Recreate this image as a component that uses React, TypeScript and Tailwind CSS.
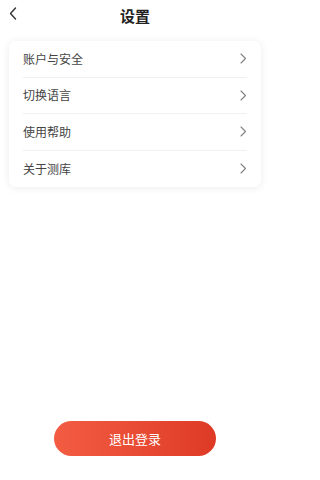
const items = ["账户与安全", "切换语言", "使用帮助", "关于测库"];

export default function App() {
  return (
    <main className="flex h-[480px] w-[270px] flex-col bg-white font-['Noto_Sans_CJK_SC',sans-serif] text-[#333]">
      <header className="relative flex h-[30px] items-center justify-center">
        <svg className="absolute left-[9px] top-[7px] h-[13px] w-[8px]" viewBox="0 0 8 13" fill="none">
          <polyline points="6.5,1 1.5,6.5 6.5,12" stroke="#333" strokeWidth="1.4" strokeLinecap="round" strokeLinejoin="round" />
        </svg>
        <h1 className="text-[15px] font-bold leading-none text-[#222]">设置</h1>
      </header>

      <section className="mx-[9px] mt-[11px] rounded-[7px] bg-white px-[14px] shadow-[0_1px_8px_rgba(0,0,0,0.08)]">
        {items.map((item, i) => (
          <div
            key={item}
            className={`flex h-[36.5px] items-center justify-between ${i < items.length - 1 ? "border-b border-[#f0f0f0]" : ""}`}
          >
            <span className="text-[12px] text-[#444]">{item}</span>
            <svg className="h-[11px] w-[7px]" viewBox="0 0 7 11" fill="none">
              <polyline points="1,1 5.5,5.5 1,10" stroke="#808080" strokeWidth="1.1" strokeLinecap="round" strokeLinejoin="round" />
            </svg>
          </div>
        ))}
      </section>

      <div className="mt-auto mb-[24px] flex justify-center">
        <button className="h-[35px] w-[162px] rounded-full bg-gradient-to-r from-[#f35c42] to-[#de3a25] text-[13px] text-white">
          退出登录
        </button>
      </div>
    </main>
  );
}
